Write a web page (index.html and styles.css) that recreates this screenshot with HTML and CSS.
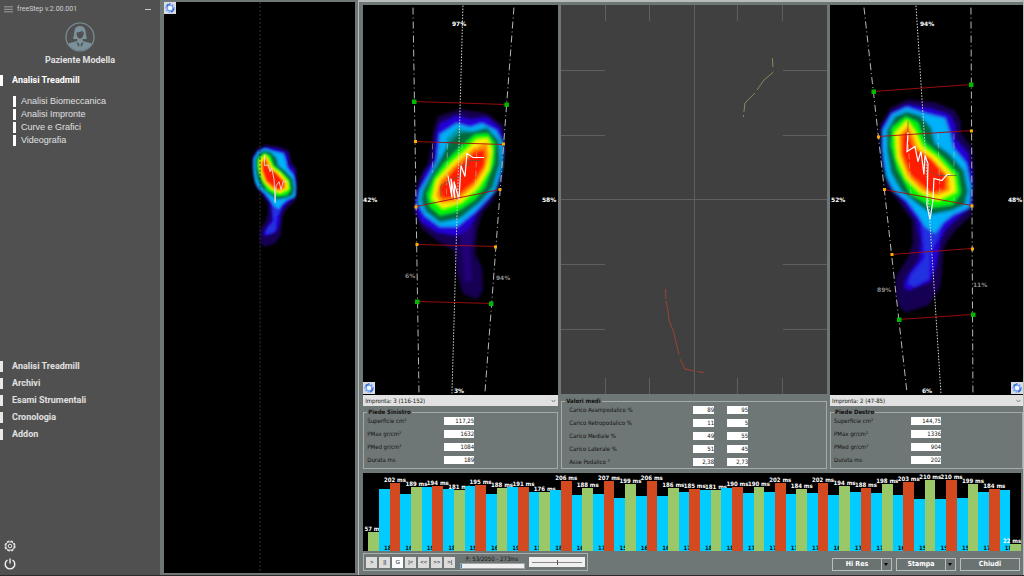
FILE: index.html
```html
<!DOCTYPE html>
<html lang="it">
<head>
<meta charset="utf-8">
<title>freeStep v.2.00.001</title>
<link rel="stylesheet" href="styles.css">
</head>
<body>
<svg class="defs" aria-hidden="true">
  <defs>
    <filter id="soft" x="-20%" y="-20%" width="140%" height="140%"><feGaussianBlur stdDeviation="1.7"/></filter>
    <symbol id="gear-blue" viewBox="0 0 12 12">
      <rect width="12" height="12" fill="#dadce2"/>
      <circle cx="6" cy="6" r="4" fill="#cfe0ff" stroke="#86aef2" stroke-width="1.800" stroke-dasharray="1.900 1"/>
      <circle cx="6" cy="6" r="2.900" fill="#e8f1ff" stroke="#5f94ea" stroke-width="1"/>
      <path d="M2.500 4.500A4 4 0 0 1 6 2M9.800 6.500A4 4 0 0 1 7 10" fill="none" stroke="#2c62c4" stroke-width="1.200"/>
      <circle cx="6.500" cy="6.200" r="1.300" fill="#fff"/>
    </symbol>
    <g id="foot-right" filter="url(#soft)">
      <path fill="#170052" d="M908 99 935 102 955 110 961 122 961 133 972 147 974 175 973 200 971 215 955 230 947 241 943 250 942 270 940 287 928 305 905 312 898 304 896 290 896 277 908 257 913 243 912 220 898 200 887 187 882 160 880 127 890 108Z"/>
      <path fill="#2400d8" d="M907 104 930 108 949 114 955 125 955 138 968 153 972 175 972 205 957 218 946 228 940 240 936 265 930 281 908 290 904 285 908 275 920 258 921 240 917 220 903 200 891 187 883 165 881 145 882 125 891 112Z"/>
      <path fill="#2030e0" d="M922 222 942 222 938 238 930 252 929 278 915 286 908 283 912 273 925 258Z"/>
      <path fill="#00b0f8" d="M907 107 925 113 945 118 950 133 953 147 966 163 971 187 969 207 953 214 943 222 935 233 925 226 919 216 907 200 894 190 886 175 883 150 883 130 892 114Z"/>
      <path fill="#006c3c" d="M907 111 920 115 931 127 935 143 949 153 964 170 968 190 965 204 952 210 932 214 917 203 901 190 891 172 887 150 887 130 895 116Z"/>
      <path fill="#00f800" d="M906 116 918 122 925 142 942 156 958 173 961 192 953 204 933 207 911 194 897 168 891 145 892 127Z"/>
      <path fill="#fff000" d="M907 120 915 131 922 146 937 157 954 176 956 191 938 200 920 192 906 178 897 157 895 133Z"/>
      <path fill="#ff8a00" d="M908 125 914 136 918 148 932 158 949 176 950 190 937 195 922 190 908 176 900 155 899 135Z"/>
      <path fill="#ff1a00" d="M908 130 913 146 930 157 946 176 946 189 931 193 910 174 902 153 902 136Z"/>
    </g>
    <g id="foot-left" filter="url(#soft)">
      <path fill="#170052" d="M438 116 460 109 487 113 503 125 505 150 502 180 493 200 482 213 477 230 475 253 482 267 483 290 477 299 463 293 457 273 455 250 438 241 422 228 414 210 415 193 420 177 428 163 432 143 434 127Z"/>
      <path fill="#2400d8" d="M440 123 457 115 470 119 487 117 501 129 504 150 500 178 490 198 477 213 468 230 457 235 438 232 421 221 416 208 417 192 425 172 434 160 436 135Z"/>
      <path fill="#2a00a0" opacity=".5" d="M460 225 474 225 470 250 472 280 465 282 463 260Z"/>
      <path fill="#00b0f8" d="M440 134 457 123 470 127 482 123 496 130 503 143 502 167 495 190 475 211 457 226 440 226 425 215 418 203 420 190 430 173 437 160Z"/>
      <path fill="#0098a8" d="M446 138 458 127 472 131 462 138 448 148Z"/>
      <path fill="#006c3c" d="M441 157 449 142 460 132 473 131 487 127 499 140 500 163 493 187 481 201 460 218 440 222 426 211 421 200 423 190 431 175Z"/>
      <path fill="#00f800" d="M444 163 459 148 475 134 488 133 495 143 494 163 485 186 475 199 457 211 440 215 430 206 427 194 434 177Z"/>
      <path fill="#fff000" d="M452 162 466 150 477 139 488 138 492 150 489 169 478 187 461 202 443 208 432 198 436 180Z"/>
      <path fill="#ff8a00" d="M454 165 473 148 487 142 489 155 485 169 475 185 457 201 442 203 436 195 440 180Z"/>
      <path fill="#ff1a00" d="M455 168 475 151 485 149 485 164 474 182 456 197 442 198 439 187Z"/>
    </g>
  </defs>
</svg>

<div class="app">
  <aside class="sidebar">
    <header class="titlebar">
      <button class="plain" aria-label="Menu"><svg width="9" height="7" viewBox="0 0 9 7"><path d="M0 .8H9M0 3.3H9M0 5.8H9" stroke="#a9a9a9" stroke-width=".9"/></svg></button>
      <span class="product">freeStep v.2.00.001</span>
      <button class="plain" aria-label="Riduci"><svg width="6" height="7" viewBox="0 0 6 7"><path d="M0 3.500H6" stroke="#c8c8c8"/></svg></button>
    </header>
    <div class="patient">
      <svg width="30" height="30" viewBox="0 0 30 30">
        <circle cx="15" cy="15" r="14" fill="none" stroke="#7b919c" stroke-width="1.2"/>
        <path fill="#7b919c" d="M15 4C9.500 4 9.300 9 9 13 8.800 15 8 16 8 16.500 9.500 17.400 11 17.300 12.300 16.800L12.500 18.500C10 20.500 5 20 3.500 22 6 26 10 28.300 15 28.300S24 26 26.500 22C25 20 20 20.500 17.500 18.500L17.700 16.800C19 17.300 20.500 17.400 22 16.500 22 16 21.200 15 21 13 20.700 9 20.500 4 15 4Z"/>
        <path fill="#505050" d="M11.500 10.500C14 10.500 16.500 9.500 17 8.500 17.500 10 18.500 10 18.800 10.500 18.800 14 17 16.500 15 16.500S11.500 14 11.500 10.500ZM11 20 15 27 19 20 15 22Z"/>
        <path fill="#7b919c" d="M14 22H16L15.700 24 16.500 27H13.500L14.300 24Z"/>
      </svg>
      <div class="patient-name">Paziente Modella</div>
    </div>
    <nav class="menu">
      <a class="item current" href="#">Analisi Treadmill</a>
      <div class="submenu">
        <a class="subitem" href="#">Analisi Biomeccanica</a>
        <a class="subitem" href="#">Analisi Impronte</a>
        <a class="subitem" href="#">Curve e Grafici</a>
        <a class="subitem" href="#">Videografia</a>
      </div>
    </nav>
    <nav class="menu menu-low">
      <a class="item" href="#">Analisi Treadmill</a>
      <a class="item" href="#">Archivi</a>
      <a class="item" href="#">Esami Strumentali</a>
      <a class="item" href="#">Cronologia</a>
      <a class="item" href="#">Addon</a>
    </nav>
    <div class="system">
      <button class="plain" aria-label="Impostazioni"><svg width="12" height="12" viewBox="0 0 12 12" fill="none" stroke="#e8e8e8"><circle cx="6" cy="6" r="4.900" stroke-width="1.300" stroke-dasharray="2.500 1.350"/><circle cx="6" cy="6" r="4.100" stroke-width=".9"/><circle cx="6" cy="6" r="1.800"/></svg></button>
      <button class="plain" aria-label="Spegni"><svg width="12" height="12" viewBox="0 0 12 12" fill="none" stroke="#f0f0f0" stroke-width="1.400"><path d="M3.500 2A4.800 4.800 0 1 0 8.500 2M6 .5V5.500"/></svg></button>
    </div>
  </aside>

  <section class="live">
    <svg class="plot" viewBox="164 2 191 572">
      <use href="#foot-right" transform="translate(-170.400 97.500) scale(.48)"/>
      <path d="M260 2V574" stroke="#383838" stroke-dasharray="2 2"/>
      <path d="M264.500 155V166L268 165 270 172 271.500 168 274 180 275 203 276 186 279 182 281 190 283 182H287" fill="none" stroke="#e8dcdc" stroke-width=".9"/>
    </svg>
    <button class="gear gear-top" aria-label="Opzioni vista"><svg width="12" height="12"><use href="#gear-blue"/></svg></button>
  </section>

  <main class="workspace">
    <div class="columns">
      <section class="column">
        <div class="screen">
          <svg class="plot" viewBox="363 5 195 389">
            <use href="#foot-left"/>
            <g fill="none">
              <path class="edge" d="M413 7 419 392M514 7 485 392"/>
              <path class="axis" d="M463 5 452 393"/>
              <path class="guide" d="M432.500 143V172M447.500 143 446.500 197M462 143V165M477 143 475 197"/>
              <path d="M441 196V185L452 179 461 175V165H469V160H481" stroke="#654" stroke-width=".7"/>
              <path class="trace" d="M448 175 452 197 451 178 455 199 454 181 459 199 461 165 465 176 467 153 473 157H484"/>
              <path class="section" d="M414 101 507 104M415 141 503 144M416 206 500 189M417 244 495 246M417 301 491 303"/>
            </g>
            <path class="corner" d="M412 99h4.500v4.500h-4.500zM504.500 102h4.500v4.500h-4.500zM415 299h4.500v4.500h-4.500zM489 301h4.500v4.500h-4.500z"/>
            <path class="joint" d="M414 139.500h3v3h-3zM502 142h3v3h-3zM414.500 205h3v3h-3zM498.500 187.500h3v3h-3zM415.500 242.500h3v3h-3zM494 245h3v3h-3z"/>
            <g class="pct"><text x="452" y="25">97%</text><text x="363" y="202">42%</text><text x="542" y="202">58%</text><text x="454" y="393">3%</text></g>
            <g class="pct dim"><text x="405" y="278">6%</text><text x="496" y="280">94%</text></g>
          </svg>
          <button class="gear gear-left" aria-label="Opzioni piede sinistro"><svg width="12" height="12"><use href="#gear-blue"/></svg></button>
        </div>
        <select class="step" aria-label="Impronta piede sinistro"><option>Impronta: 3 (116-152)</option></select>
        <fieldset class="data">
          <legend>Piede Sinistro</legend>
          <label for="sx1">Superficie cm²</label><input id="sx1" value="117,25">
          <label for="sx2">PMax gr/cm²</label><input id="sx2" value="1632">
          <label for="sx3">PMed gr/cm²</label><input id="sx3" value="1084">
          <label for="sx4">Durata ms</label><input id="sx4" value="189">
        </fieldset>
      </section>

      <section class="column">
        <div class="screen screen-grey">
          <svg class="plot" viewBox="561 5 266 389" fill="none">
            <path stroke="#606060" d="M694.500 5V394M561 199.500H827M605.500 5V21M649.500 5V21M737.500 5V21M782.500 5V21M605.500 378V394M649.500 378V394M737.500 378V394M782.500 378V394M561 70.500H605M561 135.500H605M561 264.500H605M561 329.500H605M783 70.500H827M783 135.500H827M783 264.500H827M783 329.500H827"/>
            <path stroke="#7d9158" d="M772.500 58 773 67M773.500 72 764 80 757 90M755 93 745 103 744 112M743.500 115V117"/>
            <path stroke="#9c4430" d="M665.500 289 666 299M666 301 668 310 669 320 674 333 679 355M680 359 685 369 694 371M697 371.500 704 372.500"/>
          </svg>
        </div>
        <fieldset class="data data-mean">
          <legend>Valori medi</legend>
          <label for="m1">Carico Avampodalico %</label><input id="m1" value="89"><input aria-label="Carico Avampodalico % destro" value="95">
          <label for="m2">Carico Retropodalico %</label><input id="m2" value="11"><input aria-label="Carico Retropodalico % destro" value="5">
          <label for="m3">Carico Mediale %</label><input id="m3" value="49"><input aria-label="Carico Mediale % destro" value="55">
          <label for="m4">Carico Laterale %</label><input id="m4" value="51"><input aria-label="Carico Laterale % destro" value="45">
          <label for="m5">Asse Podalico °</label><input id="m5" value="2,38"><input aria-label="Asse Podalico ° destro" value="2,73">
        </fieldset>
      </section>

      <section class="column">
        <div class="screen">
          <svg class="plot" viewBox="830 5 193 389">
            <use href="#foot-right"/>
            <g fill="none">
              <path class="edge" d="M864 7 907 392M971 7 973 392"/>
              <path class="axis" d="M916 5 941 393"/>
              <path class="guide" d="M908 135 911 196M938 133 940 195M954 133V200"/>
              <path d="M908 121V132M918 161H928V170L938 175H957" stroke="#654" stroke-width=".7"/>
              <path class="trace" d="M908 132 907 151 915 146 918 161 921 151 924 174 925 155 928 163 927 205 930 219 933 200 934 178 942 180 947 174H950"/>
              <path class="section" d="M873 91 971 84M878 136 972 130M884 189 972 205M892 254 972 248M899 319 973 314"/>
            </g>
            <path class="corner" d="M871.500 89h4.500v4.500h-4.500zM969 82h4.500v4.500h-4.500zM897 317h4.500v4.500h-4.500zM971 312h4.500v4.500h-4.500z"/>
            <path class="joint" d="M877 135h3v3h-3zM970 129h3v3h-3zM883 187.500h3v3h-3zM970.500 204h3v3h-3zM890.500 252.500h3v3h-3zM971 247h3v3h-3z"/>
            <g class="pct"><text x="920" y="25">94%</text><text x="831" y="202">52%</text><text x="1008" y="202">48%</text><text x="922" y="393">6%</text></g>
            <g class="pct dim"><text x="877" y="292">89%</text><text x="973" y="287">11%</text></g>
          </svg>
          <button class="gear gear-right" aria-label="Opzioni piede destro"><svg width="12" height="12"><use href="#gear-blue"/></svg></button>
        </div>
        <select class="step" aria-label="Impronta piede destro"><option>Impronta: 2 (47-85)</option></select>
        <fieldset class="data">
          <legend>Piede Destro</legend>
          <label for="dx1">Superficie cm²</label><input id="dx1" value="144,75">
          <label for="dx2">PMax gr/cm²</label><input id="dx2" value="1336">
          <label for="dx3">PMed gr/cm²</label><input id="dx3" value="904">
          <label for="dx4">Durata ms</label><input id="dx4" value="202">
        </fieldset>
      </section>
    </div>

    <div class="chart" id="chart"></div>

    <footer class="toolbar">
      <div class="player">
        <div class="keys">
          <button>&gt;</button><button>||</button><button class="on">G</button><button>|&lt;</button><button>&lt;&lt;</button><button>&gt;&gt;</button><button>&gt;|</button>
        </div>
        <label class="frame">F: 53/2050 - 273ms<progress value="53" max="2050"></progress></label>
        <input class="speed" type="range" aria-label="Velocità">
      </div>
      <div class="actions">
        <button><span>Hi Res</span><i class="drop"></i></button>
        <button><span>Stampa</span><i class="drop"></i></button>
        <button><span>Chiudi</span></button>
      </div>
    </footer>
  </main>
</div>
<script src="chart.js"></script>
</body>
</html>
```

FILE: styles.css
```css
* { box-sizing: border-box; }

body {
  margin: 0;
  background: #6f7776;
  color: #111;
  font-family: "DejaVu Sans Condensed", "DejaVu Sans", sans-serif;
  font-size: 6px;
  line-height: 8px;
}

button, input, select { font: inherit; color: inherit; margin: 0; }
svg { display: block; }
.defs { position: absolute; width: 0; height: 0; }
.plain { border: 0; padding: 0; background: none; }

.app {
  display: flex;
  min-height: 100vh;
  border-bottom: 1px solid #2c2a2c;
}

/* Sidebar */
.sidebar {
  flex: none;
  width: 160px;
  display: flex;
  flex-direction: column;
  background: #505050;
  color: #e0e0e0;
  font-family: Roboto, "Liberation Sans", sans-serif;
  font-size: 9px;
}
.titlebar { display: flex; align-items: center; gap: 4px; padding: 5px 9px 0 4px; }
.product { flex: 1; font: 7px/8px Roboto, "Noto Sans", sans-serif; color: #d0d0d0; }
.patient {
  display: flex;
  flex-direction: column;
  align-items: center;
  gap: 3px;
  padding-top: 9px;
  font-weight: bold;
  line-height: 11px;
}
.menu { display: flex; flex-direction: column; padding-top: 9px; gap: 6px; }
.menu a { color: inherit; text-decoration: none; line-height: 11px; }
.item { border-left: 3px solid #e8e8e8; padding-left: 9px; font-weight: bold; }
.menu .current { color: #fff; border-color: #fff; }
.submenu { display: flex; flex-direction: column; gap: 2px; padding: 4px 0 0 13px; font-family: "Liberation Sans", Arial, sans-serif; }
.menu .subitem { border-left: 3px solid #fff; padding-left: 5px; }
.menu-low { margin-top: auto; padding-top: 0; }
.system { display: flex; flex-direction: column; align-items: flex-start; gap: 6px; padding: 100px 0 5px 4px; }

/* Live view */
.live { position: relative; flex: 191 1 0; margin: 2px 3px 2px 4px; background: #000; }
.plot { position: absolute; width: 100%; height: 100%; }
.gear { position: absolute; width: 12px; height: 12px; padding: 0; border: 0; background: none; }
.gear-top { left: 0; top: 0; }
.gear-left { left: 0; bottom: 1px; }
.gear-right { right: 0; bottom: 1px; }

/* Workspace */
.workspace {
  flex: 659 1 0;
  min-width: 0;
  display: flex;
  flex-direction: column;
  border: 1px solid #b8bcba;
  border-top-width: 2px;
  border-bottom: 0;
  padding: 3px 0 4px 4px;
}
.columns { flex: 1; display: grid; grid-template-columns: 195fr 266fr 193fr; gap: 3px; }
.column { display: flex; flex-direction: column; min-width: 0; }
.screen { position: relative; flex: 1; min-height: 120px; background: #000; overflow: hidden; }
.screen-grey { background: #404040; }

.edge { stroke: #b8b8b8; stroke-dasharray: 7 3 1 3; }
.axis { stroke: #d8d8d8; stroke-dasharray: 1.5 1.5; }
.guide { stroke: #cfd8a0; stroke-width: .8px; stroke-dasharray: 6 3; opacity: .6; }
.trace { stroke: #fff; stroke-width: 1.2px; }
.section { stroke: #a80c0c; stroke-width: .9px; }
.corner { fill: #00b800; }
.joint { fill: #ffae00; }
.pct { fill: #fff; font: bold 6px "DejaVu Sans", sans-serif; }
.dim { fill: #8a8a8a; }

.step {
  appearance: none;
  height: 11px;
  margin: 0 0 2px;
  padding: 0 12px 0 2px;
  border: 0;
  border-radius: 0;
  background: #e1e1e1 url("data:image/svg+xml,%3Csvg xmlns='http://www.w3.org/2000/svg' width='5' height='4'%3E%3Cpath d='M.5.8 2.500 3 4.500.8' fill='none' stroke='%23666' stroke-width='.8'/%3E%3C/svg%3E") no-repeat right 2px center;
}

.data {
  display: grid;
  grid-template-columns: 77px 30px;
  grid-auto-rows: 8px;
  row-gap: 5px;
  min-width: 0;
  margin: 0;
  padding: 1px 3px 4px;
  border: 1px solid #a3abaa;
}
.data legend { padding: 0 1px; font: bold 6px/8px "DejaVu Sans Condensed", "DejaVu Sans", sans-serif; }
.data input {
  width: 100%;
  min-width: 0;
  height: 8px;
  padding: 0;
  border: 0;
  background: #fff;
  text-align: right;
}
.data-mean { grid-template-columns: 115px 21px 21px; column-gap: 13px; margin-top: 3px; padding-bottom: 2px; }
.data-mean label { padding-left: 4px; }

/* Bar chart */
.chart {
  display: flex;
  align-items: flex-end;
  height: 78px;
  margin: 4px 2px 0 0;
  padding-left: 5px;
  background: #000;
}
.bar { position: relative; flex: 1; min-width: 0; }
.gap { background: #00ccff; }
.left { background: #9ac768; }
.right { background: #d44a20; }
.top, .foot { position: absolute; font: bold 6px/7px "DejaVu Sans Condensed", "DejaVu Sans", sans-serif; }
.top {
  bottom: 100%;
  left: 50%;
  width: 30px;
  margin-left: -15px;
  text-align: center;
  color: #fff;
}
.foot { bottom: 0; left: 5px; color: #001420; }
.bar:last-child .top { left: auto; right: 0; width: 20px; margin-left: 0; text-align: right; }

/* Toolbar */
.toolbar { display: flex; justify-content: space-between; align-items: center; padding: 2px 3px 0 0; }
.player { display: flex; align-items: center; gap: 4px; padding: 0 2px; height: 18px; border: 1px solid #a9b0ae; }
.keys { display: flex; gap: 2px; }
.keys button { width: 11px; height: 11px; padding: 0; border: 0; background: #dcdcdc; font: 6px/11px "Liberation Sans", sans-serif; }
.keys .on { background: #fff; }
.frame { display: flex; flex-direction: column; align-items: center; width: 66px; padding-bottom: 1px; }
.frame progress { appearance: none; width: 65px; height: 6px; border: 1px solid #a0a4a4; background: #f0f0f0; }
.frame progress::-webkit-progress-bar { background: #f0f0f0; }
.frame progress::-webkit-progress-value { background: #2a86dc; }
.speed { appearance: none; width: 56px; height: 10px; background: linear-gradient(#888, #888) center / 50px 1px no-repeat #f0f0f0; }
.speed::-webkit-slider-thumb { appearance: none; width: 1px; height: 5px; background: #555; }
.actions { display: flex; gap: 4px; padding-top: 4px; }
.actions button {
  display: flex;
  align-items: center;
  width: 60px;
  height: 13px;
  padding: 0;
  border: 1px solid #b8bebc;
  background: #6b7372;
  color: #fff;
  font: bold 7px/9px "DejaVu Sans Condensed", "DejaVu Sans", sans-serif;
}
.actions span { flex: 1; }
.drop { align-self: stretch; display: flex; align-items: center; width: 10px; padding-left: 2px; border-left: 1px solid #b8bebc; }
.drop::before { content: ""; border: 2px solid transparent; border-top: 3px solid #000; border-bottom: 0; }
```

FILE: chart.js
```js
// Contact times of each foot, alternating left and right, in ms.
const contact = [57, 202, 189, 194, 181, 195, 188, 191, 176, 206, 188, 207, 199, 206, 186, 185,
  181, 190, 190, 202, 184, 202, 194, 188, 198, 203, 210, 210, 199, 184, 22];
// Time between one contact and the next, in ms.
const between = [185, 168, 190, 183, 192, 169, 190, 174, 180, 165, 170, 158, 162, 164, 176,
  180, 188, 171, 174, 170, 171, 167, 174, 171, 167, 153, 153, 156, 174, 182];
const fullScale = 231;
const chart = document.getElementById('chart');

function addBar(kind, value, labelClass, label) {
  const bar = document.createElement('div');
  bar.className = 'bar ' + kind;
  bar.style.height = (value / fullScale * 100) + '%';
  const text = document.createElement('span');
  text.className = labelClass;
  text.textContent = label;
  bar.append(text);
  chart.append(bar);
}

contact.forEach((value, i) => {
  addBar(i % 2 ? 'right' : 'left', value, 'top', value + ' ms');
  if (i < between.length) addBar('gap', between[i], 'foot', String(between[i]).slice(0, 2));
});
```
